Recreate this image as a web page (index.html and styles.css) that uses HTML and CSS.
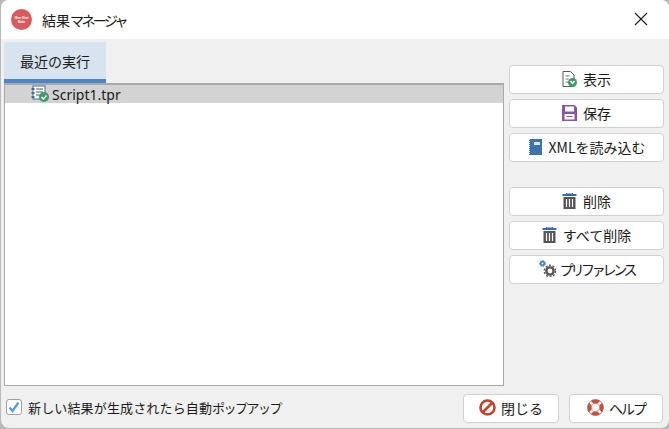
FILE: index.html
```html
<!DOCTYPE html>
<html lang="ja">
<head>
  <meta charset="UTF-8" />
  <title>結果マネージャ</title>
  <link rel="stylesheet" href="styles.css">
</head>
<body>
  <div class="window">
    <div class="titlebar">
      <div class="app-logo"><span>Morr Kiwi</span><span>Make</span></div>
      <span class="title">結果<span class="kana">マネージャ</span></span>
      <svg class="close" viewBox="0 0 14 14"><path d="M1 1l12 12M13 1L1 13" stroke="#1a1a1a" stroke-width="1.1" fill="none"/></svg>
    </div>
    <div class="content">
      <div class="main">
        <div class="left">
          <div class="tabs"><div class="tab">最近の実行</div></div>
          <div class="list">
            <div class="row">
              <svg class="ico" viewBox="0 0 20 18">
                <rect x="2" y="1" width="12" height="13" fill="#fff" stroke="#3f6f9f"/>
                <rect x="0.5" y="3" width="3" height="2" fill="#3f6f9f"/>
                <rect x="0.5" y="7" width="3" height="2" fill="#3f6f9f"/>
                <rect x="0.5" y="11" width="3" height="2" fill="#3f6f9f"/>
                <path d="M5 4h7M5 7h7M5 10h4" stroke="#555" fill="none"/>
                <circle cx="13" cy="12" r="5" fill="#3d9a6d"/>
                <path d="M10.5 12l2 2 3-3.5" stroke="#fff" stroke-width="1.4" fill="none"/>
              </svg>
              <span>Script1.tpr</span>
            </div>
          </div>
        </div>
        <div class="side">
          <div class="group">
            <button class="btn">
              <svg class="ico" viewBox="0 0 15 16">
                <path d="M1 .5h7.500l3.500 3.500v11.500H1z" fill="#fff" stroke="#555"/>
                <path d="M3.500 5h4M3.500 8h3M3.500 11h2.500" stroke="#777" fill="none"/>
                <circle cx="10.500" cy="11.500" r="4.500" fill="#3d9a6d"/>
                <path d="M8.500 10l2 2.500 2-2.500" stroke="#fff" stroke-width="1.300" fill="none"/>
              </svg>表示</button>
            <button class="btn">
              <svg class="ico" viewBox="0 0 15 16">
                <path d="M0 0h12.500l2.500 2.500V16H0z" fill="#8a53a3"/>
                <rect x="3" y="1.500" width="9" height="5" fill="#fff"/>
                <rect x="2.500" y="9" width="10" height="5.500" fill="#fff"/>
                <path d="M4.500 11.500h6" stroke="#8a53a3"/>
              </svg>保存</button>
            <button class="btn">
              <svg class="ico" viewBox="0 0 15 16">
                <rect x="1" y="0" width="13" height="16" fill="#3b74ad"/>
                <path d="M1.500 0v16" stroke="#dfe7ef" stroke-dasharray="1 1"/>
                <rect x="6" y="3" width="6" height="3" fill="#dbe6f1"/>
              </svg>XMLを読み込む</button>
          </div>
          <div class="group">
            <button class="btn">
              <svg class="ico" viewBox="0 0 14 16">
                <path d="M0 2h14" stroke="#2f6ea5" stroke-width="2"/>
                <path d="M4 1V0h6v1" stroke="#2f6ea5" fill="none"/>
                <rect x="1" y="4" width="12" height="12" fill="#555"/>
                <path d="M4 6v8M7 6v8M10 6v8" stroke="#fff" stroke-width="1.200"/>
              </svg>削除</button>
            <button class="btn">
              <svg class="ico" viewBox="0 0 14 16">
                <path d="M0 2h14" stroke="#2f6ea5" stroke-width="2"/>
                <path d="M4 1V0h6v1" stroke="#2f6ea5" fill="none"/>
                <rect x="1" y="4" width="12" height="12" fill="#555"/>
                <path d="M4 6v8M7 6v8M10 6v8" stroke="#fff" stroke-width="1.200"/>
              </svg>すべて削除</button>
            <button class="btn">
              <svg class="ico gears" viewBox="0 0 17 17">
                <circle cx="11" cy="11" r="3.600" fill="none" stroke="#555" stroke-width="2.400"/>
                <circle cx="11" cy="11" r="5.700" fill="none" stroke="#555" stroke-width="1.500" stroke-dasharray="2 1.600"/>
                <circle cx="3.500" cy="3.500" r="1.800" fill="none" stroke="#3b74ad" stroke-width="1.400"/>
                <circle cx="3.500" cy="3.500" r="3" fill="none" stroke="#3b74ad" stroke-width="1" stroke-dasharray="1.500 1.200"/>
              </svg><span class="kana-tight">プリファレンス</span></button>
          </div>
        </div>
      </div>
      <div class="footer">
        <label class="check">
          <span class="box"><svg viewBox="0 0 14 14"><path d="M2.500 7.500l3 3.500 6-8.500" stroke="#4a9be0" stroke-width="2.200" fill="none"/></svg></span>
          <span class="check-text">新しい結果が生成されたら自動<span class="kana-check">ポップアップ</span></span>
        </label>
        <div class="footer-btns">
          <button class="btn close-btn">
            <svg class="ico round" viewBox="0 0 17 17">
              <circle cx="8.500" cy="8.500" r="7" fill="none" stroke="#c8412a" stroke-width="2.600"/>
              <path d="M3.500 13.500l10-10" stroke="#c8412a" stroke-width="2.600"/>
            </svg>閉じる</button>
          <button class="btn help-btn">
            <svg class="ico round" viewBox="0 0 17 17">
              <circle cx="8.500" cy="8.500" r="6" fill="none" stroke="#d9492f" stroke-width="4"/>
              <path d="M2.500 2.500l3.700 3.700M14.500 2.500l-3.700 3.700M2.500 14.500l3.700-3.700M14.500 14.500l-3.700-3.700" stroke="#fff" stroke-width="2.600"/>
              <circle cx="8.500" cy="8.500" r="8" fill="none" stroke="#777" stroke-width="0.800"/>
              <circle cx="8.500" cy="8.500" r="4" fill="none" stroke="#999" stroke-width="0.600"/>
            </svg><span class="kana-help">ヘルプ</span></button>
        </div>
      </div>
    </div>
  </div>
</body>
</html>
```

FILE: styles.css
```css
* { box-sizing: border-box; margin: 0; padding: 0; }
html, body { height: 100%; }
body {
  background: #b9b9b9;
  font-family: "Noto Sans CJK JP", "Noto Sans", sans-serif;
  font-size: 14px;
  color: #1a1a1a;
  overflow: hidden;
}
.window {
  width: 668px; height: 428px;
  margin-left: 1px;
  background: #f0f0f0;
  border-radius: 8px;
  overflow: hidden;
  display: flex; flex-direction: column;
}
.titlebar {
  height: 39px; flex: none;
  background: #fff;
  display: flex; align-items: center;
  padding: 0 21px 0 10px;
}
.app-logo {
  width: 21px; height: 21px; border-radius: 50%;
  background: #d85a5e; color: #fff;
  font-family: "Liberation Sans", sans-serif;
  font-size: 3px; font-weight: 700; line-height: 4px;
  display: flex; flex-direction: column; align-items: center; justify-content: center;
}
.title { margin-left: 10px; font-size: 14px; }
.title .kana { letter-spacing: -2.6px; }
.close { width: 14px; height: 14px; margin-left: auto; margin-top: -1px; }
.content {
  flex: 1; min-height: 0;
  display: flex; flex-direction: column;
  padding: 3px 5px 0 3px;
}
.main { flex: 1; min-height: 0; display: flex; }
.left { width: 500px; display: flex; flex-direction: column; }
.tabs { display: flex; flex: none; }
.tab {
  width: 102px; height: 41px;
  background: #d7e3ee;
  border-bottom: 4px solid #4a86c5;
  display: flex; align-items: center; justify-content: center;
  font-size: 14px;
}
.list {
  flex: 1; min-height: 0;
  background: #fff;
  border: 1px solid #a9a9a9;
  border-top: 2px solid #a9a9a9;
}
.row {
  height: 18px;
  background: #d3d3d3;
  display: flex; align-items: center;
  padding-left: 26px;
  font-family: "Noto Sans", sans-serif;
  font-size: 14px;
}
.row .ico { width: 20px; height: 18px; margin-right: 1px; }
.side {
  flex: 1;
  padding: 23px 0 0 5px;
  display: flex; flex-direction: column; gap: 25px;
}
.group { display: flex; flex-direction: column; gap: 5px; }
.btn {
  height: 29px;
  padding-bottom: 2px;
  background: #fff;
  border: 1px solid #d0d0d0;
  border-radius: 4px;
  font-family: inherit; font-size: 14px; color: #1a1a1a;
  display: flex; align-items: center; justify-content: center;
}
.btn .ico { width: 15px; height: 16px; margin-right: 6px; }
.btn .gears { width: 17px; height: 17px; margin-right: 4px; }
.btn .round { width: 17px; height: 17px; margin-right: 5px; }
.kana-tight { letter-spacing: -3.3px; }
.kana-help { letter-spacing: -2px; }
.footer {
  height: 42px; flex: none;
  display: flex; align-items: center; justify-content: space-between;
  padding: 3px 1px 0 2px;
}
.check { display: flex; align-items: center; font-size: 13px; margin-top: -3px; }
.check-text { letter-spacing: 0.15px; }
.kana-check { letter-spacing: -1.5px; }
.box {
  width: 16px; height: 16px; margin-right: 6px;
  background: #fff; border: 1px solid #a0a0a0; border-radius: 3px;
  display: flex;
}
.footer-btns { display: flex; gap: 10px; }
.close-btn { width: 96px; }
.help-btn { width: 94px; }
```
